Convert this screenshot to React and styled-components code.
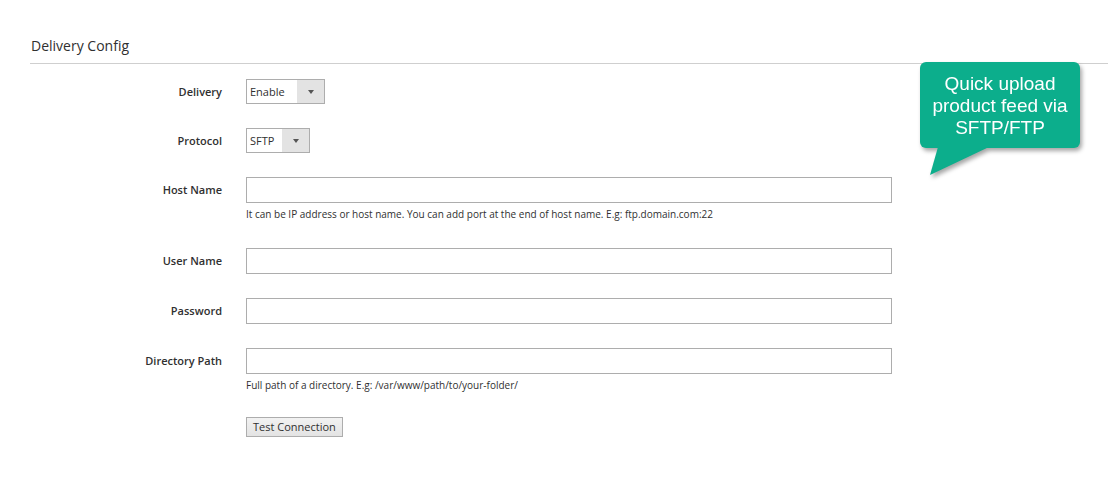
import React from "react";
import styled, { createGlobalStyle } from "styled-components";

const Global = createGlobalStyle`
  html, body { margin: 0; padding: 0; background: #fff; }
  body { font-family: "Open Sans", "Noto Sans", sans-serif; color: #303030; }
  * { box-sizing: border-box; }
`;

const Page = styled.div`
  position: relative;
  width: 1114px;
  height: 481px;
  padding: 36px 6px 0 30px;
`;

const Title = styled.div`
  font-size: 14px;
  font-weight: 400;
  color: #303030;
  line-height: 20px;
  padding-left: 1px;
  padding-bottom: 7px;
  border-bottom: 1px solid #cfcfcf;
`;

const Form = styled.div`
  display: grid;
  grid-template-columns: 192px 646px;
  column-gap: 24px;
  row-gap: 24px;
  padding-top: 15px;
`;

const Label = styled.div`
  text-align: right;
  font-size: 11px;
  font-weight: 600;
  color: #303030;
  height: ${(p) => p.h || 26}px;
  line-height: ${(p) => p.h || 26}px;
`;

const Field = styled.div`
  display: flex;
  flex-direction: column;
  align-items: flex-start;
`;

const SelectBox = styled.div`
  display: flex;
  width: ${(p) => p.w}px;
  height: 25px;
  border: 1px solid #adadad;
  background: #fff;
  font-size: 11px;
  color: #303030;
`;

const SelectValue = styled.span`
  flex: 1;
  padding-left: 3px;
  line-height: 23px;
`;

const SelectArrow = styled.span`
  width: 27px;
  background: #e3e3e3;
  display: flex;
  align-items: center;
  justify-content: center;
  &::after {
    content: "";
    border-left: 3px solid transparent;
    border-right: 3px solid transparent;
    border-top: 4px solid #555;
  }
`;

const Input = styled.div`
  width: 646px;
  height: 26px;
  border: 1px solid #adadad;
  background: #fff;
`;

const Help = styled.div`
  font-size: 10px;
  color: #303030;
  line-height: 18px;
  margin-top: 2px;
  margin-bottom: ${(p) => p.mb ?? 0}px;
`;

const Button = styled.button`
  height: 20px;
  padding: 0 6px;
  border: 1px solid #adadad;
  background: linear-gradient(#f2f2f2, #e3e3e3);
  font-family: "Open Sans", "Noto Sans", sans-serif;
  font-size: 11px;
  color: #303030;
  line-height: 18px;
  cursor: pointer;
`;

const Bubble = styled.div`
  position: absolute;
  left: 920px;
  top: 62px;
  width: 160px;
  filter: drop-shadow(2px 3px 2px rgba(0, 0, 0, 0.35));
`;

const BubbleBody = styled.div`
  background: #0cae8c;
  border-radius: 6px;
  height: 86px;
  padding-top: 11px;
  text-align: center;
  color: #fff;
  font-family: "Liberation Sans", Arial, sans-serif;
  font-size: 19px;
  line-height: 22px;
`;

const Tail = styled.svg`
  position: absolute;
  left: 9px;
  top: 85px;
  display: block;
`;

export default function App() {
  return (
    <>
      <Global />
      <Page>
        <Title>Delivery Config</Title>
        <Form>
          <Label h={25}>Delivery</Label>
          <Field>
            <SelectBox w={79}>
              <SelectValue>Enable</SelectValue>
              <SelectArrow />
            </SelectBox>
          </Field>

          <Label h={25}>Protocol</Label>
          <Field>
            <SelectBox w={64}>
              <SelectValue>SFTP</SelectValue>
              <SelectArrow />
            </SelectBox>
          </Field>

          <Label>Host Name</Label>
          <Field>
            <Input />
            <Help mb={1}>It can be IP address or host name. You can add port at the end of host name. E.g: ftp.domain.com:22</Help>
          </Field>

          <Label>User Name</Label>
          <Field>
            <Input />
          </Field>

          <Label>Password</Label>
          <Field>
            <Input />
          </Field>

          <Label>Directory Path</Label>
          <Field>
            <Input />
            <Help mb={-1}>Full path of a directory. E.g: /var/www/path/to/your-folder/</Help>
          </Field>

          <div />
          <Field>
            <Button>Test Connection</Button>
          </Field>
        </Form>

        <Bubble>
          <BubbleBody>
            Quick upload
            <br />
            product feed via
            <br />
            SFTP/FTP
          </BubbleBody>
          <Tail width="62" height="30" viewBox="0 0 62 30">
            <polygon points="9,0 60,0 1,28" fill="#0cae8c" />
          </Tail>
        </Bubble>
      </Page>
    </>
  );
}
